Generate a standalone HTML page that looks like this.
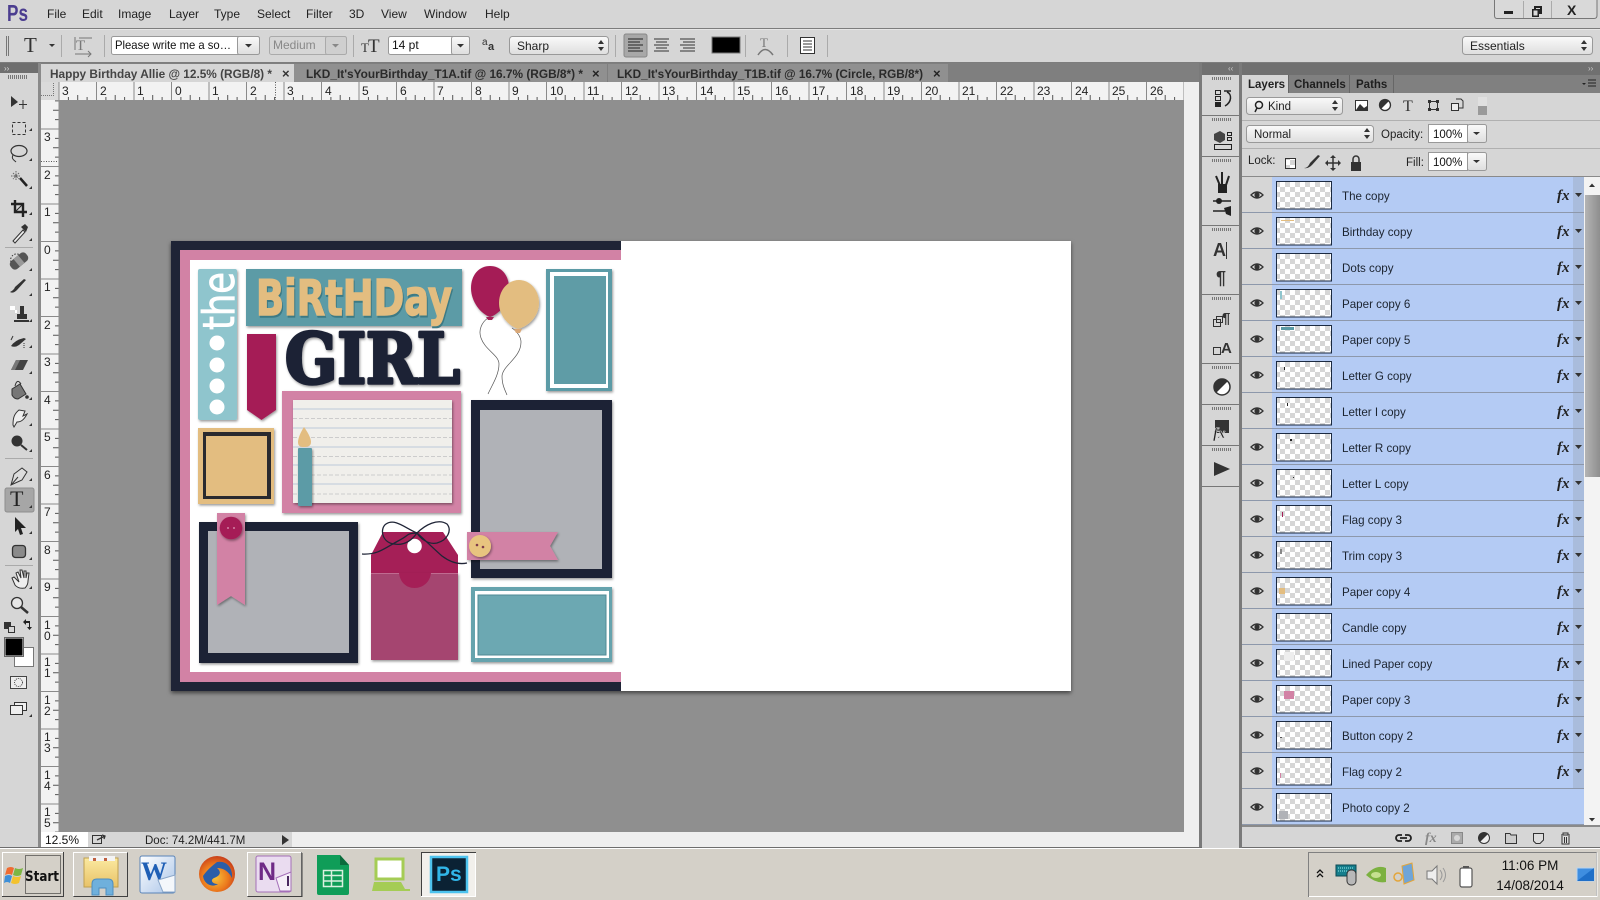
<!DOCTYPE html>
<html lang="en">
<head>
<meta charset="utf-8">
<title>Photoshop</title>
<style>
html,body{margin:0;padding:0;background:#d6d6d6;width:1600px;height:900px;overflow:hidden}
svg{display:block;font-family:"Liberation Sans",sans-serif}
.m{font-size:12px;fill:#222}
.r{font-size:12px;fill:#222}
.n{font-size:11.6px;fill:#1c2430}
.fx{font-family:"Liberation Serif",serif;font-weight:bold;font-style:italic;font-size:15px;fill:#222}
.tab{font-size:12px;font-weight:bold;fill:#444}
.i{fill:#333}
.s{stroke:#333;fill:none}
</style>
</head>
<body>
<svg width="1600" height="900" viewBox="0 0 1600 900" xmlns="http://www.w3.org/2000/svg">
<defs>
<pattern id="chk" width="10" height="10" patternUnits="userSpaceOnUse">
<rect width="10" height="10" fill="#fff"/><rect width="5" height="5" fill="#d6d6d6"/><rect x="5" y="5" width="5" height="5" fill="#d6d6d6"/>
</pattern>
<pattern id="rh" width="37.5" height="18" patternUnits="userSpaceOnUse" patternTransform="translate(171,82)">
<path d="M.5 0V18" stroke="#8a8a8a"/><path d="M9.9 15V18M19.2 13V18M28.6 15V18" stroke="#555"/>
</pattern>
<pattern id="rv" width="17.5" height="37.5" patternUnits="userSpaceOnUse" patternTransform="translate(41,241)">
<path d="M0 .5H17.5" stroke="#8a8a8a"/><path d="M14 9.9H17.5M12 19.2H17.5M14 28.6H17.5" stroke="#555"/>
</pattern>
<pattern id="grip" width="2" height="6" patternUnits="userSpaceOnUse"><rect width="1" height="6" fill="#777"/></pattern>
<filter id="sh" x="-10%" y="-10%" width="125%" height="125%"><feDropShadow dx="1" dy="1.5" stdDeviation="1.2" flood-color="#000" flood-opacity=".4"/></filter>
<filter id="cs" x="-3%" y="-3%" width="106%" height="106%"><feDropShadow dx="0" dy="2" stdDeviation="2" flood-color="#000" flood-opacity=".55"/></filter>
<linearGradient id="btn" x1="0" y1="0" x2="0" y2="1"><stop offset="0" stop-color="#fafafa"/><stop offset="1" stop-color="#dedede"/></linearGradient>
<linearGradient id="thumb" x1="0" y1="0" x2="1" y2="0"><stop offset="0" stop-color="#b4b4b4"/><stop offset="1" stop-color="#8e8e8e"/></linearGradient>
<linearGradient id="fold" x1="0" y1="0" x2="0" y2="1"><stop offset="0" stop-color="#fbe9a0"/><stop offset="1" stop-color="#e8c268"/></linearGradient>
<linearGradient id="wd" x1="0" y1="0" x2="1" y2="1"><stop offset="0" stop-color="#fff"/><stop offset="1" stop-color="#a9c4e8"/></linearGradient>
<radialGradient id="ff" cx=".45" cy=".6" r=".6"><stop offset="0" stop-color="#f7c23a"/><stop offset=".6" stop-color="#ec7a1d"/><stop offset="1" stop-color="#c9401a"/></radialGradient>
<g id="c"><path d="M0 3L3 0V3Z" fill="#333"/></g>
<g id="row">
<rect x="1242" y="0" width="30" height="36" fill="#d6d6d6"/>
<rect x="1272" y="0" width="312" height="36" fill="#b4cbf4"/>
<rect x="1573" y="0" width="11" height="36" fill="#a9bcdc"/>
<rect x="1242" y="35" width="342" height="1" fill="#8d98ab"/>
<path d="M1251 18Q1257 12 1263 18Q1257 24 1251 18Z" fill="#d8d8d8" stroke="#333" stroke-width="1.3"/><circle cx="1257" cy="18" r="2.6" fill="#333"/>
<rect x="1276.5" y="4.5" width="55" height="27.500" fill="url(#chk)" stroke="#1b2a41"/>
<path d="M1575 16H1582L1578.500 20Z" fill="#333"/>
</g>
<g id="rowl">
<rect x="1242" y="0" width="30" height="36" fill="#d6d6d6"/>
<rect x="1272" y="0" width="312" height="36" fill="#b4cbf4"/>
<rect x="1242" y="35" width="342" height="1" fill="#8d98ab"/>
<path d="M1251 18Q1257 12 1263 18Q1257 24 1251 18Z" fill="#d8d8d8" stroke="#333" stroke-width="1.3"/><circle cx="1257" cy="18" r="2.6" fill="#333"/>
<rect x="1276.5" y="4.5" width="55" height="27.500" fill="url(#chk)" stroke="#1b2a41"/>
</g>
</defs>

<!-- base -->
<rect width="1600" height="900" fill="#d6d6d6"/>
<rect y="28" width="1600" height="1" fill="#7d7d7d"/>
<rect y="29" width="1600" height="1" fill="#e6e6e6"/>
<rect y="62" width="1600" height="1" fill="#7d7d7d"/>

<!-- menu -->
<text x="7" y="21" font-size="23" font-weight="bold" fill="#4b3d8f" textLength="21" lengthAdjust="spacingAndGlyphs">Ps</text>
<text class="m" x="47" y="18">File</text><text class="m" x="82" y="18">Edit</text><text class="m" x="118" y="18">Image</text><text class="m" x="169" y="18">Layer</text><text class="m" x="214" y="18">Type</text><text class="m" x="257" y="18">Select</text><text class="m" x="306" y="18">Filter</text><text class="m" x="349" y="18">3D</text><text class="m" x="381" y="18">View</text><text class="m" x="424" y="18">Window</text><text class="m" x="485" y="18">Help</text>
<!-- window buttons -->
<path d="M1494.500 0V15.500Q1494.500 18.500 1497 18.500H1594Q1597 18.500 1597 15.500V0" fill="#d9d9d9" stroke="#777"/>
<path d="M1523.500 1V18M1551.500 1V18" stroke="#aaa"/>
<rect x="1504" y="11" width="9" height="3" fill="#222"/>
<path d="M1534 6h8v8h-3v3h-7v-8h2zM1536 8v1h4v3h0V8z" fill="#222" fill-rule="evenodd"/><rect x="1533.500" y="10.500" width="4" height="5" fill="#d9d9d9"/>
<text x="1567" y="15" font-size="14" font-weight="bold" fill="#222">X</text>

<!-- options bar -->
<rect x="5" y="36" width="4" height="20" fill="url(#grip)"/>
<text x="24" y="52" font-family="Liberation Serif" font-size="21" fill="#333">T</text>
<path d="M49 44H55L52 47Z" fill="#333"/>
<path d="M61.500 35V57M104.500 35V57M353.500 35V57M615.500 35V57M745.500 35V57M787.500 35V57M827.500 35V57" stroke="#aaa"/>
<text x="76" y="50" font-family="Liberation Serif" font-size="15" fill="#777">T</text>
<path d="M75 37V50M75 54H91M88 51L91 54L88 57M79 38H92" stroke="#777" fill="none"/>
<rect x="111.500" y="36.500" width="148" height="18" rx="2" fill="#fff" stroke="#999"/>
<rect x="237.500" y="36.500" width="22" height="18" rx="2" fill="url(#btn)" stroke="#999"/>
<path d="M245 44H252L248.500 47.500Z" fill="#333"/>
<text x="115" y="49" font-size="12" fill="#111" textLength="116" lengthAdjust="spacingAndGlyphs">Please write me a so…</text>
<rect x="269.500" y="36.500" width="77" height="18" rx="2" fill="#d6d6d6" stroke="#aaa"/>
<rect x="325.500" y="36.500" width="21" height="18" rx="2" fill="#cfcfcf" stroke="#aaa"/>
<path d="M332 44H339L335.500 47.500Z" fill="#888"/>
<text x="273" y="49" font-size="12" fill="#888">Medium</text>
<text x="368" y="52" font-family="Liberation Serif" font-size="19" fill="#333">T</text><text x="361" y="52" font-family="Liberation Serif" font-size="13" fill="#333">T</text>
<rect x="388.500" y="36.500" width="81" height="18" rx="2" fill="#fff" stroke="#999"/>
<rect x="451.500" y="36.500" width="18" height="18" rx="2" fill="url(#btn)" stroke="#999"/>
<path d="M457 44H464L460.500 47.500Z" fill="#333"/>
<text x="392" y="49" font-size="12" fill="#111">14 pt</text>
<text x="482" y="45" font-size="10" fill="#333">a</text><text x="488" y="50" font-size="11" font-weight="bold" fill="#333">a</text>
<rect x="509.500" y="36.500" width="99" height="18" rx="3" fill="url(#btn)" stroke="#999"/>
<text x="517" y="50" font-size="12" fill="#222">Sharp</text>
<path d="M598 44L601 40L604 44ZM598 47H604L601 51Z" fill="#333"/>
<rect x="624" y="34" width="23" height="23" rx="2" fill="#a8a8a8" stroke="#888"/>
<path d="M628 39H643M628 42H640M628 45H643M628 48H640M628 51H643" stroke="#222"/>
<path d="M654 39H669M656 42H667M654 45H669M656 48H667M654 51H669" stroke="#333"/>
<path d="M680 39H695M683 42H695M680 45H695M683 48H695M680 51H695" stroke="#333"/>
<rect x="712" y="37" width="28" height="16" fill="#000" stroke="#777"/>
<text x="760" y="47" font-family="Liberation Serif" font-size="13" fill="#777">T</text>
<path d="M758 55Q765 44 773 55" fill="none" stroke="#777" stroke-width="1.500"/>
<rect x="800.500" y="37.500" width="14" height="16" fill="#fff" stroke="#333"/><path d="M803 41H812M803 44H812M803 47H812M803 50H812" stroke="#333"/>
<rect x="1462.500" y="36.500" width="130" height="18" rx="3" fill="url(#btn)" stroke="#999"/>
<text x="1470" y="50" font-size="12" fill="#222">Essentials</text>
<path d="M1581 44L1584 40L1587 44ZM1581 47H1587L1584 51Z" fill="#333"/>

<!-- document area -->
<rect x="0" y="63" width="1202" height="20" fill="#7f7f7f"/>
<rect x="41" y="100" width="1143" height="732" fill="#8f8f8f"/>
<rect x="41" y="64" width="253" height="19" fill="#d6d6d6"/>
<rect x="294" y="64" width="313" height="19" fill="#909090"/>
<rect x="608" y="64" width="340" height="19" fill="#909090"/>
<text class="tab" x="50" y="78" textLength="222" lengthAdjust="spacingAndGlyphs">Happy Birthday Allie @ 12.5% (RGB/8) *</text>
<text x="282" y="78" font-size="13" font-weight="bold" fill="#333">×</text>
<text class="tab" x="306" y="78" style="fill:#2a2a2a" textLength="277" lengthAdjust="spacingAndGlyphs">LKD_It'sYourBirthday_T1A.tif @ 16.7% (RGB/8*) *</text>
<text x="592" y="78" font-size="13" font-weight="bold" fill="#222">×</text>
<text class="tab" x="617" y="78" style="fill:#2a2a2a" textLength="306" lengthAdjust="spacingAndGlyphs">LKD_It'sYourBirthday_T1B.tif @ 16.7% (Circle, RGB/8*)</text>
<text x="933" y="78" font-size="13" font-weight="bold" fill="#222">×</text>

<!-- rulers -->
<rect x="41" y="82" width="1143" height="18" fill="#f2f2f2"/>
<rect x="58" y="82" width="1126" height="18" fill="url(#rh)"/>
<rect x="41" y="100" width="17.500" height="732" fill="#f2f2f2"/>
<rect x="41" y="100" width="17.500" height="732" fill="url(#rv)"/>
<rect x="41" y="82" width="17.500" height="18" fill="#dadada"/>
<path d="M41 95.500H54M53.500 83V95" stroke="#777" stroke-dasharray="1 1" fill="none"/>
<path d="M41 161.500H58M275.500 82V100" stroke="#555" stroke-dasharray="1 1.500" fill="none"/>
<text class="r" x="62" y="95">3</text><text class="r" x="100" y="95">2</text><text class="r" x="137" y="95">1</text><text class="r" x="175" y="95">0</text><text class="r" x="212" y="95">1</text><text class="r" x="250" y="95">2</text><text class="r" x="287" y="95">3</text><text class="r" x="325" y="95">4</text><text class="r" x="362" y="95">5</text><text class="r" x="400" y="95">6</text><text class="r" x="437" y="95">7</text><text class="r" x="475" y="95">8</text><text class="r" x="512" y="95">9</text><text class="r" x="550" y="95">10</text><text class="r" x="587" y="95">11</text><text class="r" x="625" y="95">12</text><text class="r" x="662" y="95">13</text><text class="r" x="700" y="95">14</text><text class="r" x="737" y="95">15</text><text class="r" x="775" y="95">16</text><text class="r" x="812" y="95">17</text><text class="r" x="850" y="95">18</text><text class="r" x="887" y="95">19</text><text class="r" x="925" y="95">20</text><text class="r" x="962" y="95">21</text><text class="r" x="1000" y="95">22</text><text class="r" x="1037" y="95">23</text><text class="r" x="1075" y="95">24</text><text class="r" x="1112" y="95">25</text><text class="r" x="1150" y="95">26</text>
<text class="r" x="44" y="141">3</text><text class="r" x="44" y="179">2</text><text class="r" x="44" y="216">1</text><text class="r" x="44" y="254">0</text><text class="r" x="44" y="291">1</text><text class="r" x="44" y="329">2</text><text class="r" x="44" y="366">3</text><text class="r" x="44" y="404">4</text><text class="r" x="44" y="441">5</text><text class="r" x="44" y="479">6</text><text class="r" x="44" y="516">7</text><text class="r" x="44" y="554">8</text><text class="r" x="44" y="591">9</text>
<text class="r" x="44" y="629">1</text><text class="r" x="44" y="640">0</text><text class="r" x="44" y="666">1</text><text class="r" x="44" y="677">1</text><text class="r" x="44" y="704">1</text><text class="r" x="44" y="715">2</text><text class="r" x="44" y="741">1</text><text class="r" x="44" y="752">3</text><text class="r" x="44" y="779">1</text><text class="r" x="44" y="790">4</text><text class="r" x="44" y="816">1</text><text class="r" x="44" y="827">5</text>

<!-- right strip of doc -->
<rect x="1184" y="82" width="15" height="766" fill="#efefef"/>
<rect x="1199" y="63" width="3" height="785" fill="#7a7a7a"/>

<!-- canvas -->
<rect x="171" y="241" width="900" height="450" fill="#fff" filter="url(#cs)"/>
<rect x="171" y="241" width="450" height="450" fill="#1f2436"/>
<rect x="180" y="250" width="441" height="432" fill="#d282a5"/>
<rect x="190" y="260" width="431" height="412" fill="#fff"/>
<!-- the strip -->
<rect x="198" y="269" width="39" height="151" rx="2" fill="#8fc5cd" filter="url(#sh)"/>
<text transform="translate(234,330) rotate(-90)" font-family="DejaVu Sans" font-size="44" fill="#fff" stroke="#fff" stroke-width=".8" textLength="58" lengthAdjust="spacingAndGlyphs">the</text>
<circle cx="217" cy="343" r="7.500" fill="#fff"/><circle cx="217" cy="365" r="7.500" fill="#fff"/><circle cx="217" cy="386" r="7.500" fill="#fff"/><circle cx="217" cy="407" r="7.500" fill="#fff"/>
<!-- birthday banner -->
<rect x="246" y="269" width="216" height="57" fill="#5b9ba6" filter="url(#sh)"/>
<text x="257" y="317" font-family="DejaVu Sans" font-weight="bold" font-size="49" fill="#3d7a85" stroke="#3d7a85" stroke-width="1.500" textLength="196" lengthAdjust="spacingAndGlyphs">BiRtHDay</text>
<text x="256" y="315" font-family="DejaVu Sans" font-weight="bold" font-size="49" fill="#e3bd80" stroke="#e3bd80" stroke-width="1.500" textLength="196" lengthAdjust="spacingAndGlyphs">BiRtHDay</text>
<!-- ribbon -->
<path d="M247 334H276V410L261.500 420L247 410Z" fill="#a51f57" filter="url(#sh)"/>
<!-- GIRL -->
<text x="285" y="383" font-family="DejaVu Serif" font-weight="bold" font-size="69" fill="#1f2436" stroke="#1f2436" stroke-width="3.500" stroke-linejoin="round" textLength="175" lengthAdjust="spacingAndGlyphs" filter="url(#sh)">GIRL</text>
<!-- balloons -->
<path d="M488 318C482 322 478 330 481 338C485 350 499 355 499 364C499 375 492 385 488 394" fill="none" stroke="#555" stroke-width=".7"/>
<path d="M512 328C518 332 521 338 521 342C521 358 503 365 502 376C502 385 505 390 507 395" fill="none" stroke="#555" stroke-width=".7"/>
<path d="M490 266C479 266 471 275 471 288C471 302 481 314 490 317C500 314 509 302 509 288C509 275 501 266 490 266Z" fill="#a51f57" filter="url(#sh)"/>
<path d="M486 317H494L492 320H488Z" fill="#a51f57"/>
<path d="M519 280C508 280 499 290 499 303C499 316 509 326 518 329C529 326 539 316 539 303C539 290 530 280 519 280Z" fill="#e3bd80" filter="url(#sh)"/>
<path d="M514 329H522L520 333H516Z" fill="#d9a878"/>
<!-- teal frame top right -->
<rect x="546" y="269" width="66" height="122" fill="#5b9ba6" filter="url(#sh)"/>
<rect x="550" y="272" width="58" height="116" fill="#fff"/>
<rect x="554" y="276" width="52" height="108" fill="#5f9ca6"/>
<!-- tan square -->
<rect x="198" y="428" width="76" height="76" fill="#e3bd80" filter="url(#sh)"/>
<rect x="203" y="432" width="68" height="67" fill="#2a2a2e"/>
<rect x="206" y="436" width="61" height="60" fill="#e3bd80"/>
<!-- lined paper -->
<rect x="282" y="391" width="179" height="122" fill="#d282a5" filter="url(#sh)"/>
<rect x="293" y="400" width="159" height="103" fill="#f0efeb" filter="url(#sh)"/>
<path d="M293 409H452M293 428H452M293 447H452M293 465H452M293 484H452" stroke="#bcc8d8"/>
<path d="M293 418.500H452M293 437.500H452M293 456.500H452M293 475H452M293 494H452" stroke="#ccc" stroke-dasharray="4 2"/>
<!-- candle -->
<rect x="298" y="448" width="14" height="58" rx="1" fill="#5b9ba6" filter="url(#sh)"/>
<path d="M304 427C309 434 311 439 311 442C311 446 308 447 304 447C300 447 298 446 298 442C298 439 300 433 304 427Z" fill="#e3bd80"/>
<!-- gray frame right -->
<rect x="471" y="400" width="141" height="178" fill="#1f2436" filter="url(#sh)"/>
<rect x="480" y="410" width="122" height="159" fill="#b0b2b7"/>
<!-- left bottom frame -->
<rect x="199" y="522" width="159" height="141" fill="#1f2436" filter="url(#sh)"/>
<rect x="208" y="531" width="141" height="122" fill="#b0b2b7"/>
<path d="M217 513H245V605L231 596L217 605Z" fill="#d282a5" filter="url(#sh)"/>
<circle cx="231" cy="528" r="11.300" fill="#a51f57" filter="url(#sh)"/>
<circle cx="228" cy="528" r="1" fill="#d282a5"/><circle cx="234" cy="528" r="1" fill="#d282a5"/>
<!-- tag -->
<path d="M371 573V555L383 532H443L458 555V573Z" fill="#a51f57"/>
<rect x="371" y="573" width="87" height="87" fill="#a5446f" filter="url(#sh)"/>
<rect x="371" y="573" width="87" height="1" fill="#c06a90"/>
<path d="M399 573C400 582 406 588 414.500 588C423 588 430 582 431 573Z" fill="#a51f57"/>
<circle cx="414.500" cy="546" r="7.300" fill="#fff"/>
<path d="M362 554C378 555 385 548 398 541C412 534 404 534 417 533C405 528 395 518 386 524C380 528 381 542 394 544C405 546 412 540 417 533C425 525 438 518 447 524C452 530 448 540 437 543C428 545 420 538 417 533C425 540 435 550 442 556C450 562 458 565 467 563" fill="none" stroke="#1f2436" stroke-width="1.300"/>
<!-- flag banner -->
<path d="M467 532H558L550 546L558 560H467Z" fill="#d282a5" filter="url(#sh)"/>
<circle cx="480" cy="546" r="11" fill="#e8c47f" filter="url(#sh)"/>
<circle cx="477" cy="545" r="1.300" fill="#7d3b4b"/><circle cx="483" cy="547" r="1.300" fill="#7d3b4b"/>
<!-- teal bottom -->
<rect x="471" y="587" width="141" height="75" fill="#66a3ad" filter="url(#sh)"/>
<rect x="475" y="591" width="134" height="67" fill="#fff"/>
<rect x="478" y="595" width="128" height="60" fill="#6ca8b2" stroke="#4f8a94"/>

<!-- toolbar -->
<rect x="0" y="63" width="38" height="785" fill="#d6d6d6"/>
<rect x="0" y="63" width="38" height="10" fill="#6f6f6f"/>
<text x="4" y="71" font-size="8" fill="#ddd">››</text>
<rect x="38" y="63" width="3" height="785" fill="#8a8a8a"/>
<rect x="8" y="75" width="20" height="4" fill="url(#grip)"/>
<path d="M11 96L18 102L11 107Z" class="i"/><path d="M23 100V109M19 104.500H27" class="s"/>
<rect x="12.500" y="122.500" width="13" height="12" fill="none" stroke="#333" stroke-dasharray="3 2"/>
<ellipse cx="19" cy="151" rx="8" ry="5.500" class="s" stroke-width="1.200"/><path d="M13 155C11 159 14 160 16 162" class="s"/>
<path d="M20 178L27 186" stroke="#222" stroke-width="2.500"/><path d="M11 176H21M16 171V181M13 173L19 179M19 173L13 179" stroke="#666" stroke-dasharray="1.500 1"/>
<path d="M15 200V212H27M11 204H23V217" fill="none" stroke="#222" stroke-width="2.400"/><path d="M15 212L23 204" stroke="#222"/>
<path d="M13 241L23 230L25 232L15 243Z" fill="#eee" stroke="#333"/><path d="M21 227L25 224L28 227L26 232Z" class="i"/>
<g transform="translate(19,261) rotate(-40)"><rect x="-10" y="-5" width="20" height="10" rx="4" fill="#555"/><rect x="-3" y="-5" width="6" height="10" fill="#999"/></g>
<path d="M11 262A6 6 0 0 1 20 255" stroke="#333" stroke-dasharray="1.500 1.500" fill="none"/>
<path d="M26 280L17 290Q13 294 10 292Q14 290 15 287L24 279Z" class="i"/>
<rect x="10" y="306" width="7" height="7" fill="url(#chk)"/>
<path d="M20 306H24V314H27V319H17V314H20Z" fill="#333"/><rect x="14" y="320" width="15" height="2" fill="#333"/>
<path d="M11 346Q15 340 24 338L26 339L19 345Q15 348 11 346ZM13 336H22" fill="#333"/><path d="M13 336L11 340" class="s"/><path d="M24 343V349" stroke="#333" stroke-dasharray="1 1"/>
<path d="M11 370L16 360H28L23 370Z" fill="#444"/><path d="M11 370L16 360L20 360L15 370Z" fill="#777"/>
<path d="M12 389L20 384L26 394L18 399Q14 399 12 395Z" fill="#777" stroke="#333"/><path d="M15 386Q17 378 21 384" class="s"/><circle cx="27" cy="397" r="1.800" fill="#333"/>
<path d="M13 425C13 418 14 414 19 410L25 411L23 416L27 414C24 420 21 422 17 422L14 427Z" fill="#eee" stroke="#333"/>
<circle cx="17" cy="441" r="5.500" class="i"/><path d="M21 445L27 450" stroke="#333" stroke-width="2"/>
<path d="M11 485L14 474L22 468L27 472L22 480Z" fill="#ddd" stroke="#333"/><path d="M12 484L18 477" class="s"/>
<rect x="5" y="488" width="29" height="24" rx="2" fill="#a6a6a6" stroke="#8e8e8e"/>
<text x="10" y="506" font-family="Liberation Serif" font-size="22" fill="#222">T</text>
<path d="M15 517L26 528L21 528L23 534L20 535L18 529L15 532Z" fill="#222"/>
<rect x="12.500" y="545.500" width="13" height="12" rx="3" fill="#8a8a8a" stroke="#333" stroke-width="1.300"/>
<path d="M12 578L15 585Q18 589 25 588Q28 585 28 581L29 573L27 573L26 578L26 571H24L24 578L22 570H20L21 578L18 572L16 573L19 582L14 577Z" fill="#eee" stroke="#333"/>
<circle cx="17" cy="603" r="5.500" fill="#e6e6e6" stroke="#333" stroke-width="1.300"/><path d="M21 607L28 613" stroke="#333" stroke-width="2.500"/>
<rect x="4.500" y="622.500" width="6" height="6" fill="#333" stroke="#333"/><rect x="8.500" y="626.500" width="6" height="6" fill="#d6d6d6" stroke="#333"/>
<path d="M23 622L26 619V621H30V627H32L29.500 630L27 627H29V623H26V625Z" fill="#222"/>
<rect x="14.500" y="647.500" width="19" height="19" fill="#fff" stroke="#777"/>
<rect x="5" y="638" width="18" height="18" fill="#000" stroke="#e8e8e8"/><rect x="4.500" y="637.500" width="19" height="19" fill="none" stroke="#666"/>
<rect x="10.500" y="676.500" width="16" height="12" fill="#eee" stroke="#444"/><circle cx="18.500" cy="682.500" r="4" fill="none" stroke="#444" stroke-dasharray="1 1"/>
<rect x="14.500" y="702.500" width="12" height="8" fill="#eee" stroke="#333"/><rect x="10.500" y="705.500" width="12" height="9" fill="#eee" stroke="#333"/>
<path d="M5 247.500H33M5 458.500H33M5 565.500H33" stroke="#aaa"/>
<use href="#c" x="29" y="128"/><use href="#c" x="29" y="158"/><use href="#c" x="29" y="186"/><use href="#c" x="29" y="212"/><use href="#c" x="29" y="238"/><use href="#c" x="29" y="268"/><use href="#c" x="29" y="293"/><use href="#c" x="29" y="319"/><use href="#c" x="29" y="345"/><use href="#c" x="29" y="371"/><use href="#c" x="29" y="397"/><use href="#c" x="29" y="423"/><use href="#c" x="29" y="449"/><use href="#c" x="29" y="478"/><use href="#c" x="29" y="505"/><use href="#c" x="29" y="531"/><use href="#c" x="29" y="557"/><use href="#c" x="29" y="586"/><use href="#c" x="29" y="714"/>

<!-- status bar -->
<rect x="41" y="832" width="1143" height="15" fill="#efefef"/>
<rect x="88" y="832" width="204" height="15" fill="#d6d6d6"/>
<rect x="41" y="832" width="47" height="15" fill="#fff"/>
<text x="45" y="844" font-size="12" fill="#111">12.5%</text>
<rect x="92.500" y="835.500" width="9" height="8" fill="none" stroke="#333"/><path d="M97 840L105 836M102 835L105 836L104 839" class="s" stroke-width="1.300"/>
<text x="145" y="844" font-size="11.500" fill="#222">Doc: 74.2M/441.7M</text>
<path d="M282 835L289 840L282 845Z" fill="#333"/>
<rect y="847" width="1600" height="1" fill="#6e6e6e"/>

<!-- dock -->
<rect x="1202" y="63" width="398" height="12" fill="#707070"/>
<text x="1228" y="71" font-size="8" fill="#ccc">‹‹</text>
<text x="1588" y="71" font-size="8" fill="#ccc">››</text>
<rect x="1202" y="75" width="37" height="773" fill="#d6d6d6"/>
<rect x="1239" y="63" width="3" height="785" fill="#7a7a7a"/>
<path d="M1202 115.500H1239M1202 156.500H1239M1202 225.500H1239M1202 294.500H1239M1202 363.500H1239M1202 404.500H1239M1202 445.500H1239M1202 486.500H1239" stroke="#777"/>
<rect x="1211" y="77" width="20" height="3" fill="url(#grip)"/><rect x="1211" y="118" width="20" height="3" fill="url(#grip)"/><rect x="1211" y="159" width="20" height="3" fill="url(#grip)"/><rect x="1211" y="228" width="20" height="3" fill="url(#grip)"/><rect x="1211" y="297" width="20" height="3" fill="url(#grip)"/><rect x="1211" y="366" width="20" height="3" fill="url(#grip)"/><rect x="1211" y="407" width="20" height="3" fill="url(#grip)"/><rect x="1211" y="448" width="20" height="3" fill="url(#grip)"/>
<!-- dock icons -->
<rect x="1215.500" y="90.500" width="5" height="4" fill="none" stroke="#222"/><rect x="1215.500" y="96.500" width="5" height="4" fill="none" stroke="#222"/><rect x="1215" y="102" width="6" height="5" fill="#222"/>
<path d="M1224 91H1231M1227 92C1232 94 1232 102 1225 106" fill="none" stroke="#222" stroke-width="1.500"/>
<path d="M1214 134L1220 131L1225 134V140L1220 143L1214 140Z" fill="#444"/><rect x="1227.500" y="132.500" width="4" height="3" fill="none" stroke="#222"/><rect x="1227.500" y="137.500" width="4" height="3" fill="none" stroke="#222"/><rect x="1214.500" y="144.500" width="17" height="5" fill="none" stroke="#222"/>
<path d="M1216 176L1221 188M1229 176L1225 188M1222 172V188" stroke="#222" stroke-width="2"/><rect x="1218" y="184" width="9" height="9" fill="#222"/>
<path d="M1213 201H1231M1213 211H1225" stroke="#222" stroke-width="1.600"/><circle cx="1219" cy="201" r="3" fill="#222"/><path d="M1224 208L1231 206V216L1226 214Z" fill="#222"/>
<text x="1213" y="256" font-size="18" font-weight="bold" fill="#333">A</text><rect x="1226" y="242" width="1" height="17" fill="#333"/>
<text x="1216" y="284" font-size="18" font-weight="bold" fill="#333">¶</text>
<text x="1222" y="323" font-size="15" font-weight="bold" fill="#333">¶</text><rect x="1213.500" y="319.500" width="7" height="7" fill="none" stroke="#333"/><rect x="1216.500" y="316.500" width="6" height="6" fill="none" stroke="#333"/>
<text x="1221" y="353" font-size="15" font-weight="bold" fill="#333">A</text><rect x="1213.500" y="347.500" width="7" height="7" fill="none" stroke="#333"/>
<circle cx="1222" cy="387" r="8" fill="#fff" stroke="#333" stroke-width="1.500"/><path d="M1216 393A8 8 0 0 1 1228 381Z" fill="#333"/>
<rect x="1215" y="420" width="14" height="13" fill="#333"/>
<text x="1213" y="438" font-family="Liberation Serif" font-size="15" font-style="italic" font-weight="bold" fill="#222" stroke="#d6d6d6" stroke-width=".6">fx</text>
<path d="M1214 462L1230 469L1214 476Z" fill="#333"/>

<!-- layers panel -->
<rect x="1242" y="75" width="358" height="18" fill="#808080"/>
<rect x="1242" y="75" width="46" height="18" fill="#d6d6d6"/>
<path d="M1288.500 75V93M1349.500 75V93M1393.500 75V93" stroke="#666"/>
<text x="1248" y="88" font-size="11.500" font-weight="bold" fill="#222">Layers</text>
<text x="1294" y="88" font-size="11.500" font-weight="bold" fill="#1e1e1e">Channels</text>
<text x="1356" y="88" font-size="11.500" font-weight="bold" fill="#1e1e1e">Paths</text>
<path d="M1582 83H1586L1584 85Z" fill="#222"/><path d="M1588 80H1596M1588 83H1596M1588 86H1596" stroke="#222"/>
<rect x="1242" y="93" width="358" height="84" fill="#d6d6d6"/>
<rect x="1246.500" y="97.500" width="96" height="17" rx="3" fill="url(#btn)" stroke="#999"/>
<circle cx="1259" cy="105" r="3.500" fill="none" stroke="#222" stroke-width="1.500"/><path d="M1257 108L1255 112" stroke="#222" stroke-width="1.500"/>
<text x="1268" y="110" font-size="11.500" fill="#222">Kind</text>
<path d="M1332 104L1335 100L1338 104ZM1332 107H1338L1335 111Z" fill="#333"/>
<rect x="1355.500" y="100.500" width="12" height="10" fill="#fff" stroke="#333"/><path d="M1356 110L1360 104L1364 108L1367 106V110Z" fill="#333"/>
<circle cx="1385" cy="105" r="5.500" fill="#fff" stroke="#333" stroke-width="1.300"/><path d="M1381 109A5.500 5.500 0 0 1 1389 101Z" fill="#333"/>
<text x="1403" y="111" font-family="Liberation Serif" font-size="16" fill="#333">T</text>
<rect x="1429.500" y="101.500" width="8" height="8" fill="none" stroke="#333"/><path d="M1428 100h3v3h-3zM1436 100h3v3h-3zM1428 108h3v3h-3zM1436 108h3v3h-3z" fill="#333"/>
<rect x="1451.500" y="103.500" width="7" height="7" fill="#eee" stroke="#333"/><path d="M1456 99h5l2 2v7h-4" fill="none" stroke="#333"/>
<rect x="1478" y="97" width="9" height="18" fill="#e0e0e0"/><rect x="1478" y="106" width="9" height="9" fill="#9a9a9a"/>
<rect x="1242" y="120" width="358" height="1" fill="#b0b0b0"/>
<rect x="1246.500" y="125.500" width="127" height="17" rx="3" fill="url(#btn)" stroke="#999"/>
<text x="1254" y="138" font-size="11.500" fill="#222">Normal</text>
<path d="M1364 132L1367 128L1370 132ZM1364 135H1370L1367 139Z" fill="#333"/>
<text x="1381" y="138" font-size="11.500" fill="#222">Opacity:</text>
<rect x="1428.500" y="124.500" width="39" height="18" fill="#fff" stroke="#999"/>
<rect x="1467.500" y="124.500" width="19" height="18" rx="2" fill="url(#btn)" stroke="#999"/>
<text x="1433" y="138" font-size="11.500" fill="#111">100%</text>
<path d="M1473 132H1480L1476.500 135Z" fill="#333"/>
<rect x="1242" y="148" width="358" height="1" fill="#b0b0b0"/>
<text x="1248" y="164" font-size="11.500" fill="#222">Lock:</text>
<rect x="1285.500" y="158.500" width="10" height="10" fill="url(#chk)" stroke="#333"/>
<path d="M1304 168Q1308 168 1310 163L1318 155L1320 156L1312 165Q1308 169 1304 168Z" fill="#333"/>
<path d="M1333 157V169M1327 163H1339" stroke="#333" stroke-width="1.500"/><path d="M1333 155L1330 158H1336ZM1333 171L1330 168H1336ZM1325 163L1328 160V166ZM1341 163L1338 160V166Z" fill="#333"/>
<rect x="1351" y="162" width="10" height="9" fill="#333"/><path d="M1353 162V159A3 3 0 0 1 1359 159V162" fill="none" stroke="#333" stroke-width="1.500"/>
<text x="1406" y="166" font-size="11.500" fill="#222">Fill:</text>
<rect x="1428.500" y="152.500" width="39" height="18" fill="#fff" stroke="#999"/>
<rect x="1467.500" y="152.500" width="19" height="18" rx="2" fill="url(#btn)" stroke="#999"/>
<text x="1433" y="166" font-size="11.500" fill="#111">100%</text>
<path d="M1473 160H1480L1476.500 163Z" fill="#333"/>
<rect x="1242" y="176" width="358" height="1" fill="#8a8a8a"/>

<!-- layer rows -->
<use href="#row" y="177"/><use href="#row" y="213"/><use href="#row" y="249"/><use href="#row" y="285"/><use href="#row" y="321"/><use href="#row" y="357"/><use href="#row" y="393"/><use href="#row" y="429"/><use href="#row" y="465"/><use href="#row" y="501"/><use href="#row" y="537"/><use href="#row" y="573"/><use href="#row" y="609"/><use href="#row" y="645"/><use href="#row" y="681"/><use href="#row" y="717"/><use href="#row" y="753"/><use href="#rowl" y="789"/>
<text class="n" x="1342" y="200">The copy</text>
<text class="n" x="1342" y="236">Birthday copy</text>
<text class="n" x="1342" y="272">Dots copy</text>
<text class="n" x="1342" y="308">Paper copy 6</text>
<text class="n" x="1342" y="344">Paper copy 5</text>
<text class="n" x="1342" y="380">Letter G copy</text>
<text class="n" x="1342" y="416">Letter I copy</text>
<text class="n" x="1342" y="452">Letter R copy</text>
<text class="n" x="1342" y="488">Letter L copy</text>
<text class="n" x="1342" y="524">Flag copy 3</text>
<text class="n" x="1342" y="560">Trim copy 3</text>
<text class="n" x="1342" y="596">Paper copy 4</text>
<text class="n" x="1342" y="632">Candle copy</text>
<text class="n" x="1342" y="668">Lined Paper copy</text>
<text class="n" x="1342" y="704">Paper copy 3</text>
<text class="n" x="1342" y="740">Button copy 2</text>
<text class="n" x="1342" y="776">Flag copy 2</text>
<text class="n" x="1342" y="812">Photo copy 2</text>
<text class="fx" x="1557" y="200">fx</text><text class="fx" x="1557" y="236">fx</text><text class="fx" x="1557" y="272">fx</text><text class="fx" x="1557" y="308">fx</text><text class="fx" x="1557" y="344">fx</text><text class="fx" x="1557" y="380">fx</text><text class="fx" x="1557" y="416">fx</text><text class="fx" x="1557" y="452">fx</text><text class="fx" x="1557" y="488">fx</text><text class="fx" x="1557" y="524">fx</text><text class="fx" x="1557" y="560">fx</text><text class="fx" x="1557" y="596">fx</text><text class="fx" x="1557" y="632">fx</text><text class="fx" x="1557" y="668">fx</text><text class="fx" x="1557" y="704">fx</text><text class="fx" x="1557" y="740">fx</text><text class="fx" x="1557" y="776">fx</text>
<!-- thumbnail marks -->
<rect x="1281" y="220" width="13" height="1" fill="#e3bd80"/>
<rect x="1280" y="291" width="2" height="8" fill="#8fc5cd"/>
<rect x="1281" y="327" width="13" height="3" fill="#5b9ba6"/>
<rect x="1284" y="367" width="1" height="3" fill="#222"/><rect x="1287" y="403" width="1" height="3" fill="#222"/><rect x="1290" y="439" width="2" height="2" fill="#222"/><rect x="1293" y="477" width="1" height="1" fill="#222"/>
<rect x="1282" y="512" width="1" height="5" fill="#a51f57"/>
<rect x="1280" y="549" width="2" height="5" fill="#888"/>
<rect x="1279" y="588" width="6" height="6" fill="#e3bd80"/>
<rect x="1284" y="652" width="10" height="9" fill="#eee"/>
<rect x="1284" y="691" width="10" height="8" fill="#d282a5"/>
<rect x="1280" y="737" width="2" height="1" fill="#555"/>
<rect x="1280" y="773" width="1" height="5" fill="#d282a5"/>
<rect x="1279" y="811" width="9" height="8" fill="#b0b2b7"/>
<!-- panel scrollbar -->
<rect x="1584" y="177" width="16" height="648" fill="#f3f3f3"/>
<rect x="1585" y="195" width="15" height="282" fill="url(#thumb)"/>
<path d="M1589 187H1595L1592 183.500Z" fill="#333"/><path d="M1589 818H1595L1592 821.500Z" fill="#333"/>
<rect x="1242" y="825" width="358" height="2" fill="#8a8a8a"/>
<rect x="1242" y="827" width="358" height="20" fill="#d6d6d6"/>
<!-- panel bottom icons -->
<path d="M1402 835H1399A3 3 0 0 0 1399 841H1402M1405 835H1408A3 3 0 0 1 1408 841H1405M1400 838H1407" fill="none" stroke="#222" stroke-width="1.800"/>
<text x="1425" y="842" font-family="Liberation Serif" font-size="14" font-style="italic" font-weight="bold" fill="#888">fx</text>
<rect x="1451.500" y="832.500" width="11" height="11" fill="#aaa" stroke="#888"/><circle cx="1457" cy="838" r="3" fill="#d6d6d6"/>
<circle cx="1484" cy="838" r="5.500" fill="#eee" stroke="#333"/><path d="M1480 842A5.500 5.500 0 0 1 1488 834Z" fill="#333"/>
<path d="M1505.500 843.500V833.500H1510L1511 835H1516.500V843.500Z" fill="#ccc" stroke="#333"/>
<path d="M1533.500 833.500H1543.500V840L1540 843.500H1536L1533.500 841Z" fill="#ddd" stroke="#333"/>
<path d="M1561 835H1570M1563 835V833H1568V835M1562 836V844H1569V836" fill="#ddd" stroke="#333"/><path d="M1564.500 837V843M1566.500 837V843" stroke="#333"/>

<!-- taskbar -->
<rect y="848" width="1600" height="52" fill="#d4d0c8"/>
<rect y="848" width="1600" height="1" fill="#fff"/>
<!-- start -->
<rect x="2.500" y="852.500" width="61" height="44" fill="#d4d0c8" stroke="#404040"/>
<path d="M2.500 896V852.500H63" fill="none" stroke="#fff"/>
<rect x="25.500" y="855.500" width="35" height="38" fill="none" stroke="#111" stroke-dasharray="1 1"/>
<path d="M7 868Q11 866 14 868L12 875Q9 873 5 875Z" fill="#ef6b31"/><path d="M15 868Q19 870 23 868L21 875Q17 877 13 875Z" fill="#7cb643"/><path d="M5 876Q9 874 12 876L10 883Q7 881 4 883Z" fill="#3d8fd8"/><path d="M13 876Q17 878 21 876L19 883Q15 885 11 883Z" fill="#f3c22d"/>
<text x="25" y="881" font-size="14" font-weight="bold" font-family="DejaVu Sans" fill="#111" textLength="34" lengthAdjust="spacingAndGlyphs">Start</text>
<!-- folder -->
<rect x="73.500" y="852.500" width="54" height="44" fill="#d4d0c8" stroke="#888"/><path d="M73.500 896V852.500H127" fill="none" stroke="#fff"/>
<path d="M127.500 853V896.500H74" fill="none" stroke="#404040"/>
<path d="M84 858H118V887H84Z" fill="url(#fold)" stroke="#c0a050"/>
<rect x="89" y="856" width="26" height="5" fill="#f4f4f4"/><rect x="93" y="858" width="3" height="3" fill="#c06040"/><rect x="104" y="858" width="3" height="3" fill="#c06040"/>
<path d="M92 895V884Q92 879 97 879H108Q113 879 113 884V895H106V888H99V895Z" fill="#6fb0dc" stroke="#4e8ec0"/>
<!-- word -->
<rect x="140" y="856" width="35" height="37" rx="2" fill="url(#wd)" stroke="#5a84b8"/>
<text x="141" y="880" font-size="26" font-weight="bold" font-family="Liberation Serif" fill="#1f5fb5">W</text>
<path d="M158 880L175 875V892H163Z" fill="#f4f7fb" stroke="#8aa6c8"/>
<!-- firefox -->
<circle cx="217" cy="874" r="18" fill="url(#ff)"/>
<path d="M217 862C228 860 233 870 232 878C228 870 222 868 217 868C222 872 220 876 214 878C210 880 212 884 218 884C212 888 204 884 203 876C207 870 212 866 217 862Z" fill="#2b5ea8"/>
<!-- onenote -->
<rect x="247.500" y="852.500" width="54" height="44" fill="#d4d0c8" stroke="#888"/><path d="M247.500 896V852.500H301" fill="none" stroke="#fff"/><path d="M302 853V896.500H248" fill="none" stroke="#404040"/>
<rect x="256" y="856" width="35" height="36" rx="2" fill="#eadcf0" stroke="#a46fb8"/>
<text x="258" y="880" font-size="25" font-weight="bold" fill="#6f2a86">N</text>
<path d="M276 878L291 872V891H280Z" fill="#f5eff8" stroke="#a46fb8"/><rect x="287" y="876" width="2" height="10" fill="#4a2a60"/>
<!-- sheets -->
<path d="M317 855H340L349 865V893Q349 895 347 895H319Q317 895 317 893Z" fill="#0f9d58"/><path d="M340 855L349 865H340Z" fill="#0b6b3c"/>
<path d="M323.500 870.500H342.500V886.500H323.500ZM323.500 875.500H342.500M323.500 881H342.500M331.500 870.500V886.500" fill="none" stroke="#d9f0e0" stroke-width="1.500"/>
<!-- laptop -->
<rect x="376" y="859" width="27" height="20" fill="#fff" stroke="#a5cc55" stroke-width="3"/>
<path d="M374 882H401L405 889H410V891H372Z" fill="#a5cc55"/>
<!-- ps -->
<rect x="421.500" y="852.500" width="54" height="44" fill="#f2f0ec" stroke="#fff"/><path d="M421.500 896V852.500H476" fill="none" stroke="#404040"/>
<rect x="431" y="857" width="36" height="35" fill="#0b2234" stroke="#4ec3ee" stroke-width="2.500"/>
<text x="436" y="881" font-size="21" font-weight="bold" fill="#31b6e8">Ps</text>
<!-- tray -->
<rect x="1308.500" y="852.500" width="288" height="44" fill="#d4d0c8" stroke="#808080"/>
<path d="M1309 896.500H1597V852.500" fill="none" stroke="#fff"/>
<path d="M1317 873L1320 870L1323 873M1317 877L1320 874L1323 877" fill="none" stroke="#111" stroke-width="1.300"/>
<rect x="1336" y="865" width="20" height="11" fill="#157e8c" stroke="#0b4a55"/><path d="M1338 868H1354M1338 871H1354" stroke="#9ee" stroke-dasharray="1 1"/>
<rect x="1347" y="870" width="9" height="15" rx="4" fill="#b8b8b8" stroke="#333"/>
<path d="M1366 875Q1376 864 1386 868V882Q1376 884 1366 875Z" fill="#7cb140"/><ellipse cx="1376" cy="875" rx="5" ry="3" fill="#c5e090"/>
<path d="M1402 866L1412 863L1414 880L1404 884Z" fill="#6fa5d8" stroke="#e3a53a"/><circle cx="1398" cy="877" r="4" fill="none" stroke="#e3a53a" stroke-width="1.500"/>
<path d="M1427 871H1432L1437 866V884L1432 879H1427Z" fill="#eee" stroke="#777"/><path d="M1440 870Q1444 875 1440 880M1443 868Q1448 875 1443 882" fill="none" stroke="#999"/>
<rect x="1460" y="868" width="12" height="19" rx="2" fill="#fff" stroke="#555" stroke-width="1.200"/><rect x="1463" y="866" width="6" height="2" fill="#555"/>
<text x="1530" y="870" font-size="13.500" text-anchor="middle" fill="#111">11:06 PM</text>
<text x="1530" y="890" font-size="13.500" text-anchor="middle" fill="#111">14/08/2014</text>
<rect x="1577" y="868" width="17" height="13" fill="#3f8ee0" stroke="#b8d4f0"/><path d="M1577 881L1594 868V881Z" fill="#1f6fc8"/>
</svg>
</body>
</html>
